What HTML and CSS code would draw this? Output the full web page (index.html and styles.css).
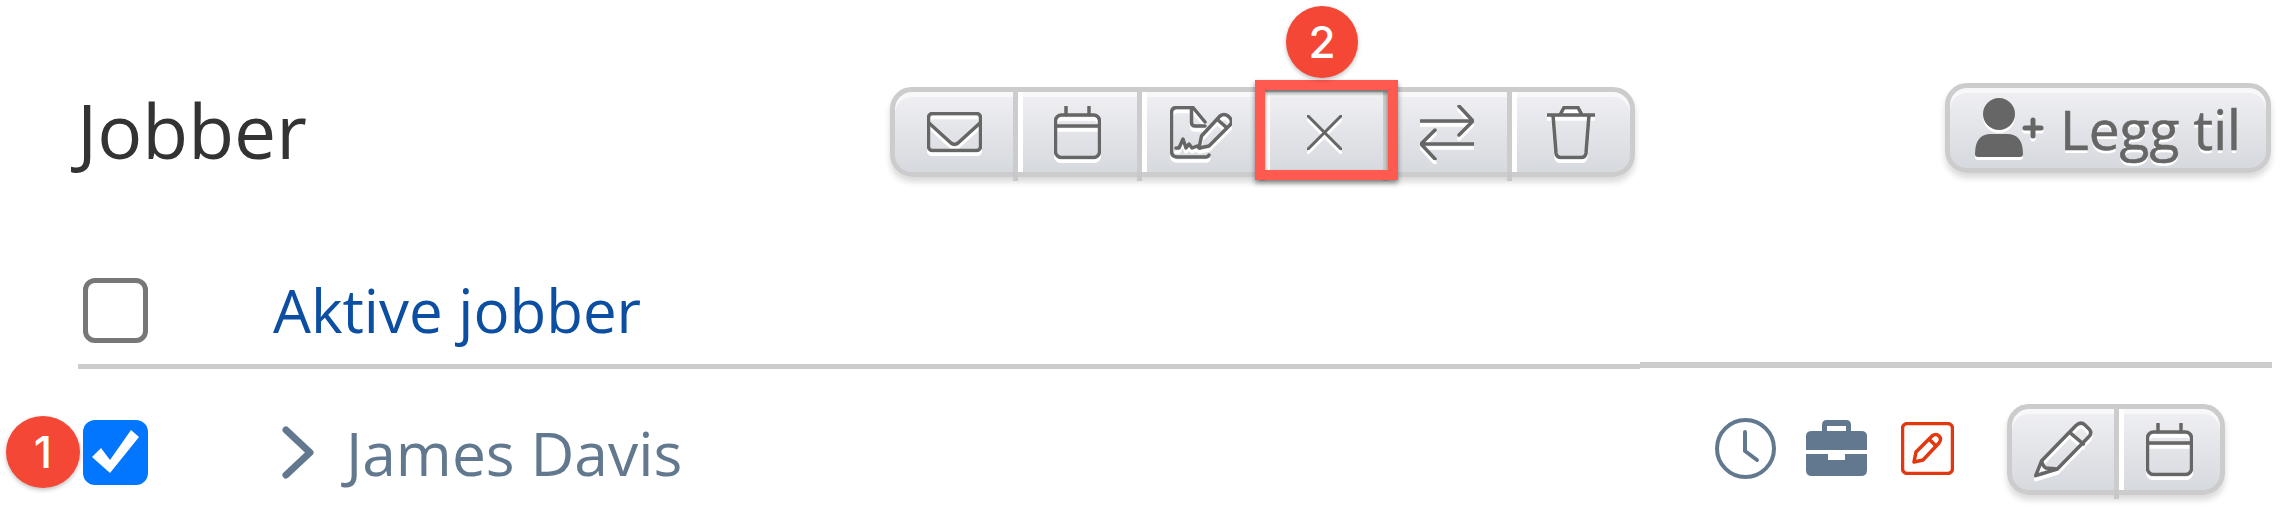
FILE: index.html
```html
<!DOCTYPE html>
<html lang="en">
  <head>
    <meta charset="UTF-8" />
    <title>Jobber</title>
    <link rel="stylesheet" href="styles.css">
  </head>
  <body>
    <div class="page">
      <!-- Title and actions -->
      <div class="top">
        <h1>Jobber</h1>
        <div class="btn-group toolbar">
          <button class="seg">
            <svg class="ico ico-mail" viewBox="0 0 55 40"><rect x="1.500" y="1.500" width="52" height="37" rx="4"/><path d="M2 11 L24 31 Q27.500 33.500 31 31 L53 11"/></svg>
          </button>
          <button class="seg">
            <svg class="ico ico-cal" viewBox="0 0 47 53"><rect x="1.500" y="9" width="44" height="42.500" rx="6"/><path d="M12 1 V9 M35 1 V9 M2 20 H45"/></svg>
          </button>
          <button class="seg">
            <svg class="ico ico-sign" viewBox="0 0 62 53"><path d="M39 49 Q38 51 36 51 H7 Q1.500 51 1.500 45 V7 Q1.500 1.500 7 1.500 H23 L35 16 M21.500 2 V16 Q21.500 20 25 20 H35"/><path d="M6 42 H9 L13 33 L16 42 L19 38 L22 42 L27 40 L30 42"/><path d="M29 42 L31.500 30 L50 10 Q54 7 58 10 L60 12 Q63 16 60 19 L39 40 Z M48 14 L57 22"/></svg>
          </button>
          <button class="seg seg-x">
            <svg class="ico ico-x" viewBox="0 0 35 35"><path d="M1 1 L34 34 M34 1 L1 34"/></svg>
            <span class="mark"></span>
            <span class="badge badge-2">2</span>
          </button>
          <button class="seg">
            <svg class="ico ico-swap" viewBox="0 0 54 55"><path d="M0 16 H53 M39 1 L53 16 L39 30 M54 39 H1 M15 25 L1 39 L15 54"/></svg>
          </button>
          <button class="seg">
            <svg class="ico ico-trash" viewBox="0 0 48 53"><path d="M0 9 H48 M13 9 L17 1.500 H31 L35 9 M6 9 L9 47 Q9.500 51.500 14 51.500 H34 Q38.500 51.500 39 47 L42 9"/></svg>
          </button>
        </div>
        <button class="btn-add">
          <svg class="add-ico" viewBox="0 0 70 60"><circle cx="24" cy="16" r="16"/><path d="M0 56 Q0 36 16 36 H32 Q48 36 48 56 Q48 59 45 59 H3 Q0 59 0 56 Z"/><path d="M58 22 V38 M50 30 H66" class="plus"/></svg>
          Legg til
        </button>
      </div>

      <!-- List header -->
      <div class="list-head">
        <span class="check"></span>
        <a class="list-title">Aktive jobber</a>
      </div>

      <!-- Job row -->
      <div class="job-row">
        <span class="check checked">
          <svg viewBox="0 0 65 65"><path d="M9 37 L18 28 L27 40 L48 10 L56 17 L27 53 Z" /></svg>
          <span class="badge badge-1">1</span>
        </span>
        <svg class="chevron" viewBox="0 0 32 53"><path d="M4 4 L28 26.500 L4 49" /></svg>
        <span class="job-name">James Davis</span>
        <div class="job-icons">
          <svg class="clock" viewBox="0 0 61 61"><circle cx="30.500" cy="30.500" r="28.500"/><path d="M30 14 V33 L42 42"/></svg>
          <svg class="case" viewBox="0 0 61 57"><path d="M16 12 V6 Q16 1 21 1 H40 Q45 1 45 6 V12 H55 Q61 12 61 17 V31 H0 V17 Q0 12 6 12 Z M21 12 H40 V7 H21 Z"/><path d="M0 35 H22 V41 H39 V35 H61 V51 Q61 57 55 57 H6 Q0 57 0 51 Z"/></svg>
          <svg class="note" viewBox="0 0 53 53"><rect x="1.500" y="1.500" width="50" height="50" rx="5"/><path d="M13 40 L15 30 L31 14 Q35 11 38 14 Q41 17 38 21 L22 38 Z M28 17 L35 24"/></svg>
        </div>
        <div class="btn-group row-btns">
          <button class="seg">
            <svg class="ico ico-pen" viewBox="0 0 60 60"><path d="M2.700 55.700 L8.700 40.700 L42.700 5.700 Q47.700 1 52 5 L56.500 9.500 Q59.500 13.500 55.300 17.300 L24.300 49 Z M36.700 12.300 L50.300 24 M8.700 40.700 Q10 47 13 48 L24.300 49"/></svg>
          </button>
          <button class="seg">
            <svg class="ico ico-cal" viewBox="0 0 47 53"><rect x="1.500" y="9" width="44" height="42.500" rx="6"/><path d="M12 1 V9 M35 1 V9 M2 20 H45"/></svg>
          </button>
        </div>
      </div>
    </div>
  </body>
</html>
```

FILE: styles.css
```css
* {
  margin: 0;
  padding: 0;
  box-sizing: border-box;
}

body {
  font-family: "Open Sans", Arial, sans-serif;
  background: #fff;
}

.page {
  width: 2290px;
  height: 532px;
  overflow: hidden;
}

/* Top row */
.top {
  display: flex;
  align-items: flex-start;
  padding: 83px 19px 0 77px;
  height: 278px;
}

h1 {
  font-size: 75px;
  font-weight: 400;
  line-height: 94px;
  color: #333;
  width: 813px;
}

/* Shared button look */
.btn-group,
.btn-add {
  border: 5px solid #ccc;
  border-radius: 22px;
  background: linear-gradient(#f0f0f4, #d6d9de);
  box-shadow: inset 0 5px 0 #f8f8fa, 0 5px 6px rgba(0, 0, 0, 0.15);
}

.btn-group {
  display: flex;
}

.toolbar {
  width: 745px;
  height: 90px;
  margin-top: 4px;
}

.seg {
  flex: 1;
  position: relative;
  display: flex;
  align-items: center;
  justify-content: center;
  border: none;
  background: none;
}

.seg + .seg {
  border-left: 5px solid #ccc;
  box-shadow: inset 5px 0 0 #fff;
}

/* divider pokes out under the group */
.seg + .seg::before {
  content: "";
  position: absolute;
  left: -5px;
  bottom: -9px;
  width: 5px;
  height: 9px;
  background: #c8c8c8;
}

/* keep the red marker above the next button's divider */
.seg-x {
  z-index: 1;
}

.ico {
  fill: none;
  stroke: #666;
  stroke-width: 3.5;
  stroke-linecap: round;
  stroke-linejoin: round;
  filter: drop-shadow(0 4px 0 #fff);
}

.ico-mail { width: 55px; height: 40px; }
.ico-cal { width: 47px; height: 53px; }
.ico-sign { width: 62px; height: 53px; }
.ico-x { width: 35px; height: 35px; stroke-width: 3; }
.ico-swap { width: 54px; height: 55px; }
.ico-trash { width: 48px; height: 53px; }
.ico-pen { width: 60px; height: 60px; }

.mark {
  position: absolute;
  left: -10px;
  right: -15px;
  top: -12px;
  bottom: -8px;
  border: 10px solid #ff5a50;
  box-shadow: 0 3px 5px rgba(0, 0, 0, 0.45), inset 0 3px 4px rgba(0, 0, 0, 0.45);
}

.badge {
  position: absolute;
  display: flex;
  align-items: center;
  justify-content: center;
  border-radius: 50%;
  background: #f44736;
  color: #fff;
  font-family: Inter, Arial, sans-serif;
  font-weight: 500;
  font-size: 44px;
  box-shadow: 0 2px 4px rgba(0, 0, 0, 0.25);
}

.badge-2 {
  left: 21px;
  top: -86px;
  width: 72px;
  height: 72px;
}

.badge-1 {
  left: -77px;
  top: -4px;
  width: 74px;
  height: 72px;
}

.btn-add {
  display: flex;
  align-items: center;
  gap: 15px;
  width: 326px;
  height: 90px;
  margin-left: auto;
  padding-left: 25px;
  font-family: "Open Sans", Arial, sans-serif;
  font-size: 55px;
  font-weight: 500;
  color: #666;
  -webkit-text-stroke: 0.6px #666;
  text-shadow: 0 3px 0 #fff;
}

.add-ico {
  width: 70px;
  height: 60px;
  fill: #666;
  filter: drop-shadow(0 3px 0 #fff);
}

.add-ico .plus {
  fill: none;
  stroke: #666;
  stroke-width: 5;
  stroke-linecap: round;
}

/* List */
.list-head {
  position: relative;
  display: flex;
  align-items: flex-start;
  height: 91px;
  margin: 0 18px 0 78px;
  padding-left: 5px;
  border-bottom: 5px solid #ccc;
}

/* right half of the rule sits a pixel higher */
.list-head::after {
  content: "";
  position: absolute;
  left: 1562px;
  right: 0;
  bottom: -5px;
  height: 6px;
  background: #ccc;
  border-bottom: 1px solid #fff;
}

.check {
  flex: none;
  position: relative;
  display: block;
  width: 65px;
  height: 65px;
  border: 5px solid #777;
  border-radius: 12px;
}

.list-title {
  margin-left: 125px;
  font-size: 60px;
  line-height: 65px;
  color: #0b4ea2;
}

.job-row {
  display: flex;
  align-items: center;
  height: 65px;
  margin-top: 51px;
  padding: 0 65px 0 83px;
}

.checked {
  border: none;
  background: #0276fe;
}

.checked svg {
  display: block;
  width: 65px;
  height: 65px;
  fill: #fff;
}

.chevron {
  width: 32px;
  height: 53px;
  margin-left: 134px;
  fill: none;
  stroke: #62788f;
  stroke-width: 7;
  stroke-linecap: round;
  stroke-linejoin: round;
}

.job-name {
  margin-left: 32px;
  font-size: 60.5px;
  color: #62788f;
}

.job-icons {
  display: flex;
  align-items: center;
  gap: 30px;
  margin-left: auto;
  margin-bottom: 8px;
}

.clock {
  width: 61px;
  height: 61px;
  fill: none;
  stroke: #62788f;
  stroke-width: 4;
  stroke-linecap: round;
  stroke-linejoin: round;
}

.case {
  width: 61px;
  height: 57px;
  margin-bottom: 3px;
  fill: #62788f;
  fill-rule: evenodd;
}

.note {
  width: 53px;
  height: 53px;
  margin-left: 4px;
  fill: none;
  stroke: #e2380f;
  stroke-width: 3.5;
  stroke-linecap: round;
  stroke-linejoin: round;
}

.row-btns {
  width: 218px;
  height: 91px;
  margin-left: 53px;
  margin-bottom: 6px;
}
```
